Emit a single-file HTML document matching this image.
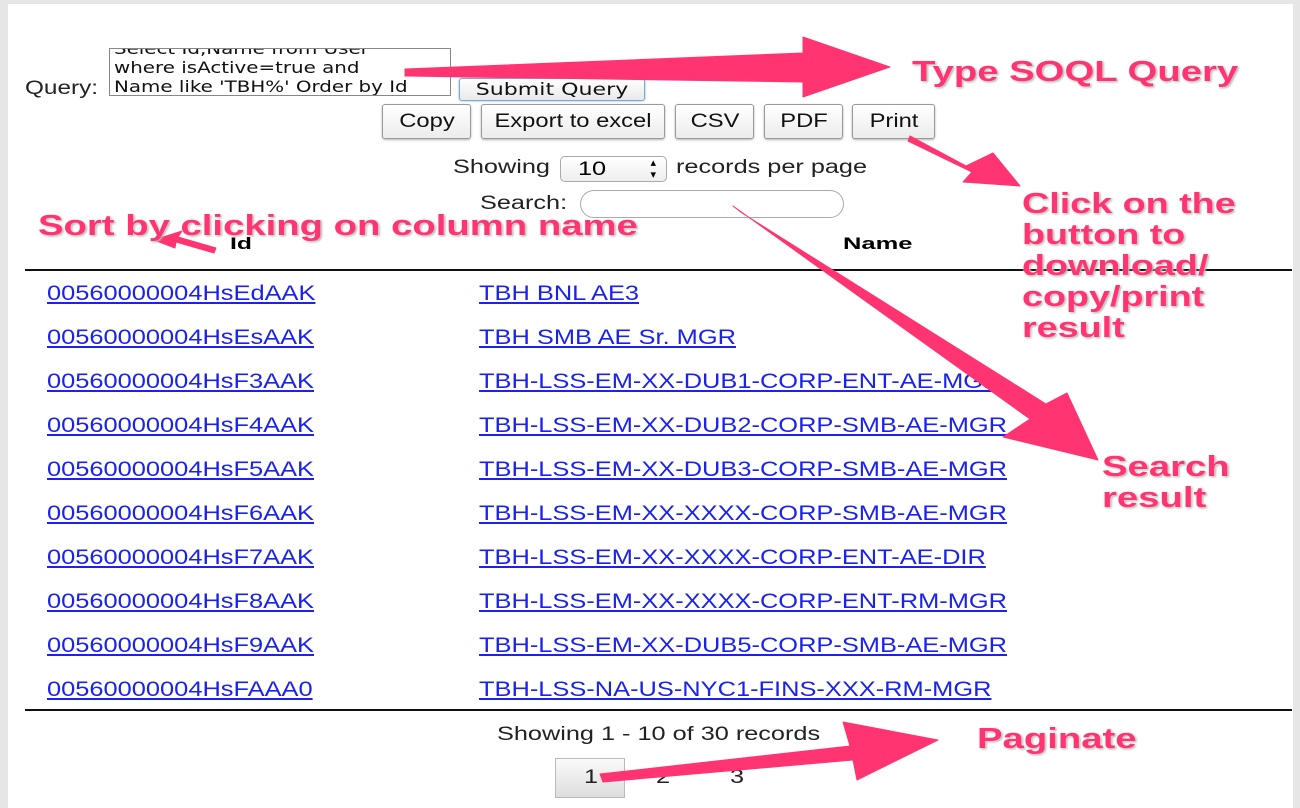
<!DOCTYPE html>
<html><head><meta charset="utf-8"><style>
html,body{margin:0;padding:0}
body{width:1300px;height:808px;position:relative;overflow:hidden;background:#e6e6e6;font-family:"Liberation Sans",Arial,sans-serif}
#pg{position:absolute;left:8px;top:4px;width:1285px;height:804px;background:#fff}
.t{position:absolute;white-space:nowrap;transform-origin:0 0;transform:scaleX(1.2);color:#222}
.s{font-size:19px;line-height:19px;transform:scaleX(1.33)}
.l{color:#1a22f0;text-decoration:underline;font-size:21px;line-height:21px;transform:scaleX(1.21)}
.a{position:absolute;white-space:nowrap;transform-origin:0 0;transform:scaleX(1.32);color:#ff3471;font-weight:bold;font-size:29px;line-height:31px;text-shadow:0 0 2px #fff,1px 1px 2px #999}
.btn{position:absolute;height:33px;border:1px solid #999;border-radius:3px;background:linear-gradient(#fff,#ececec);box-shadow:0 1px 2px rgba(0,0,0,.3);color:#111}
.btn span{position:absolute;left:50%;top:7px;font-size:19px;line-height:19px;white-space:nowrap;transform:translateX(-50%) scaleX(1.25)}
.hr{position:absolute;left:25px;width:1267px;height:2px;background:#111}
</style></head><body>
<div id="pg"></div>
<div class="t s" style="left:25px;top:79px;transform:scaleX(1.28)">Query:</div>
<div style="position:absolute;left:109px;top:48px;width:340px;height:46px;border:1px solid #888;background:#fff;overflow:hidden">
<div style="position:absolute;left:4px;top:-10px;font-family:'DejaVu Sans',sans-serif;font-size:16px;line-height:19px;color:#111;white-space:nowrap;transform-origin:0 0;transform:scaleX(1.24)">Select Id,Name from User<br>where isActive=true and<br>Name like 'TBH%' Order by Id</div></div>
<div style="position:absolute;left:459px;top:78px;width:184px;height:21px;border:1px solid #7aa7e0;border-radius:3px;background:linear-gradient(#fff,#e9e9e9);box-shadow:0 0 2px #8ab"><span style="position:absolute;left:50%;top:2px;font-family:'DejaVu Sans',sans-serif;font-size:17px;line-height:19px;color:#111;white-space:nowrap;transform:translateX(-50%) scaleX(1.3)">Submit Query</span></div>
<div class="btn" style="left:382px;top:104px;width:87px"><span>Copy</span></div>
<div class="btn" style="left:481px;top:104px;width:182px"><span>Export to excel</span></div>
<div class="btn" style="left:675px;top:104px;width:77px"><span>CSV</span></div>
<div class="btn" style="left:764px;top:104px;width:77px"><span>PDF</span></div>
<div class="btn" style="left:852px;top:104px;width:81px"><span>Print</span></div>
<div class="t s" style="left:453px;top:158px">Showing</div>
<div style="position:absolute;left:560px;top:156px;width:105px;height:24px;border:1px solid #aaa;border-radius:5px;background:linear-gradient(#fff,#eee)"><span style="position:absolute;left:17px;top:3px;font-size:19px;line-height:19px;transform-origin:0 0;transform:scaleX(1.33)">10</span><span style="position:absolute;right:10px;top:0px;font-size:11px;line-height:12px">▴<br>▾</span></div>
<div class="t s" style="left:676px;top:158px">records per page</div>
<div class="t s" style="left:480px;top:194px">Search:</div>
<div style="position:absolute;left:580px;top:190px;width:262px;height:26px;border:1px solid #aaa;border-radius:14px;background:#fff"></div>
<div class="t" style="left:230px;top:235px;font-size:17px;line-height:17px;font-weight:bold;color:#000;transform:scaleX(1.45)">Id</div>
<div class="t" style="left:843px;top:235px;font-size:17px;line-height:17px;font-weight:bold;color:#000;transform:scaleX(1.5)">Name</div>
<div class="hr" style="top:269px"></div>
<div class="hr" style="top:709px"></div>

<div class="t l" style="left:47px;top:283px">00560000004HsEdAAK</div><div class="t l" style="left:479px;top:283px">TBH BNL AE3</div>
<div class="t l" style="left:47px;top:327px">00560000004HsEsAAK</div><div class="t l" style="left:479px;top:327px">TBH SMB AE Sr. MGR</div>
<div class="t l" style="left:47px;top:371px">00560000004HsF3AAK</div><div class="t l" style="left:479px;top:371px">TBH-LSS-EM-XX-DUB1-CORP-ENT-AE-MGR</div>
<div class="t l" style="left:47px;top:415px">00560000004HsF4AAK</div><div class="t l" style="left:479px;top:415px">TBH-LSS-EM-XX-DUB2-CORP-SMB-AE-MGR</div>
<div class="t l" style="left:47px;top:459px">00560000004HsF5AAK</div><div class="t l" style="left:479px;top:459px">TBH-LSS-EM-XX-DUB3-CORP-SMB-AE-MGR</div>
<div class="t l" style="left:47px;top:503px">00560000004HsF6AAK</div><div class="t l" style="left:479px;top:503px">TBH-LSS-EM-XX-XXXX-CORP-SMB-AE-MGR</div>
<div class="t l" style="left:47px;top:547px">00560000004HsF7AAK</div><div class="t l" style="left:479px;top:547px">TBH-LSS-EM-XX-XXXX-CORP-ENT-AE-DIR</div>
<div class="t l" style="left:47px;top:591px">00560000004HsF8AAK</div><div class="t l" style="left:479px;top:591px">TBH-LSS-EM-XX-XXXX-CORP-ENT-RM-MGR</div>
<div class="t l" style="left:47px;top:635px">00560000004HsF9AAK</div><div class="t l" style="left:479px;top:635px">TBH-LSS-EM-XX-DUB5-CORP-SMB-AE-MGR</div>
<div class="t l" style="left:47px;top:679px">00560000004HsFAAA0</div><div class="t l" style="left:479px;top:679px">TBH-LSS-NA-US-NYC1-FINS-XXX-RM-MGR</div>

<div class="t s" style="left:497px;top:725px">Showing 1 - 10 of 30 records</div>
<div style="position:absolute;left:555px;top:758px;width:68px;height:38px;border:1px solid #bbb;background:linear-gradient(#fafafa,#ddd)"></div>
<div class="t s" style="left:584px;top:768px">1</div>
<div class="t s" style="left:656px;top:768px">2</div>
<div class="t s" style="left:730px;top:768px">3</div>

<svg style="position:absolute;left:0;top:0" width="1300" height="808">
<g fill="#ff3471" stroke="#ff3471" stroke-linejoin="round" stroke-width="1">
<polygon points="405,69 803,53 803,37 890,67 803,97 803,82 405,76"/>
<polygon points="910,136 966,166 993,153 1020,186 963,182 972,172 908,141"/>
<polygon points="733,206 1030,419 1003,437 1098,460 1067,393 1046,404 742,213"/>
<polygon points="216,248 178,237 182,231 154,240 175,248 176,242 214,253"/>
<polygon points="600,774 850,746 843,722 938,740 857,780 853,760 603,782"/>
</g></svg>

<div class="a" style="left:912px;top:57px">Type SOQL Query</div>
<div class="a" style="left:38px;top:211px">Sort by clicking on column name</div>
<div class="a" style="left:1022px;top:189px;line-height:31px;transform:scaleX(1.3)">Click on the<br>button to<br>download/<br>copy/print<br>result</div>
<div class="a" style="left:1102px;top:452px">Search<br>result</div>
<div class="a" style="left:977px;top:724px">Paginate</div>
</body></html>
